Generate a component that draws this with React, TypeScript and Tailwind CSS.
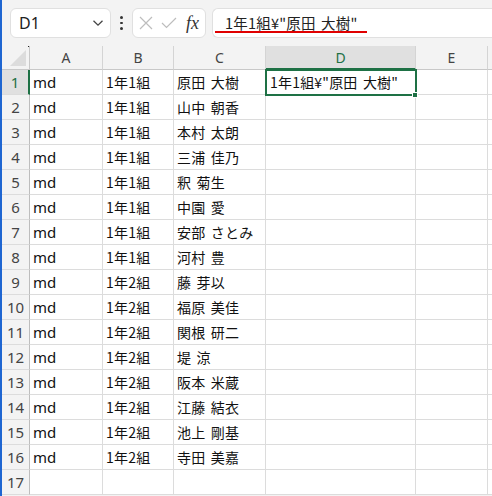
import React from "react";

const rows: [string, string, string][] = [
  ["md", "1年1組", "原田 大樹"],
  ["md", "1年1組", "山中 朝香"],
  ["md", "1年1組", "本村 太朗"],
  ["md", "1年1組", "三浦 佳乃"],
  ["md", "1年1組", "釈 菊生"],
  ["md", "1年1組", "中園 愛"],
  ["md", "1年1組", "安部 さとみ"],
  ["md", "1年1組", "河村 豊"],
  ["md", "1年2組", "藤 芽以"],
  ["md", "1年2組", "福原 美佳"],
  ["md", "1年2組", "関根 研二"],
  ["md", "1年2組", "堤 涼"],
  ["md", "1年2組", "阪本 米蔵"],
  ["md", "1年2組", "江藤 結衣"],
  ["md", "1年2組", "池上 剛基"],
  ["md", "1年2組", "寺田 美嘉"],
  ["", "", ""],
];

const cols = "grid-cols-[28px_73px_71px_92px_150px_72px_1fr]";
const jp = "font-['Noto_Sans_CJK_JP','Noto_Sans',sans-serif] text-[14.5px] tracking-[0.2px] [word-spacing:2px]";
const cell = "h-[25px] border-r border-b border-[#dcdcdc] bg-white px-[3px] flex items-center text-[14px] text-[#111] whitespace-nowrap overflow-hidden";

function Toolbar() {
  return (
    <div className="flex h-[46px] items-center bg-[#f3f3f3] pl-[8px]">
      <div className="flex h-[30px] w-[101px] items-center justify-between rounded-[6px] border border-[#e0e0e0] bg-white pl-[8px] pr-[6px]">
        <span className="font-['Noto_Sans',sans-serif] text-[16px] text-[#222]">D1</span>
        <svg width="12" height="8" viewBox="0 0 12 8" fill="none" stroke="#444" strokeWidth="1.3">
          <path d="M1.5 1.8 6 6.2 10.5 1.8" />
        </svg>
      </div>
      <div className="flex w-[21px] flex-col items-center gap-[3px]">
        <span className="h-[2.5px] w-[2.5px] rounded-full bg-[#333]" />
        <span className="h-[2.5px] w-[2.5px] rounded-full bg-[#333]" />
        <span className="h-[2.5px] w-[2.5px] rounded-full bg-[#333]" />
      </div>
      <div className="flex h-[30px] w-[74px] items-center rounded-[6px] border border-[#e0e0e0] bg-white pl-[6px]">
        <svg width="14" height="14" viewBox="0 0 14 14" fill="none" stroke="#bdbdbd" strokeWidth="1.2">
          <path d="M1 1 13 13M13 1 1 13" />
        </svg>
        <svg className="ml-[8px]" width="16" height="12" viewBox="0 0 16 12" fill="none" stroke="#bdbdbd" strokeWidth="1.2">
          <path d="M1 6 5.5 10.5 15 1" />
        </svg>
        <span className="ml-[9px] font-['Liberation_Serif',serif] text-[18px] italic leading-none text-[#333]">fx</span>
      </div>
      <div className="relative ml-[6px] flex h-[30px] flex-1 items-center rounded-l-[6px] border border-r-0 border-[#e0e0e0] bg-white pl-[12px]">
        <span className={`${jp} text-[#222]`}>1年1組¥"原田 大樹"</span>
        <div className="absolute left-[2px] top-[22px] h-[2px] w-[152px] bg-[#e00000]" />
      </div>
    </div>
  );
}

export default function App() {
  return (
    <div className="h-[496px] w-[492px] overflow-hidden border-l-2 border-[#1f66d1] bg-[#f3f3f3]">
      <Toolbar />
      <div className={`grid ${cols}`}>
        <div className="relative h-[24px] border-r border-b border-[#c8c8c8] bg-[#f3f3f3]">
          <span className="absolute right-[0px] top-0 h-[1px] w-[1px] bg-[#222]" />
          <svg className="absolute bottom-[3px] right-[3px]" width="16" height="16" viewBox="0 0 16 16">
            <path d="M16 0 16 16 0 16Z" fill="#dcdcdc" />
          </svg>
        </div>
        {["A", "B", "C", "D", "E", ""].map((c) => (
          <div
            key={c || "x"}
            className={`flex h-[24px] items-center justify-center border-r border-[#d4d4d4] font-['Noto_Sans',sans-serif] text-[14px] ${
              c === "D" ? "border-b-2 border-b-[#1e7145] bg-[#e0e0e0] text-[#1e7145]" : "border-b border-b-[#c8c8c8] bg-[#f3f3f3] text-[#444]"
            }`}
          >
            {c}
          </div>
        ))}
        {rows.map((r, i) => (
          <React.Fragment key={i}>
            <div
              className={`flex h-[25px] items-center justify-center border-b border-[#dcdcdc] font-['Noto_Sans',sans-serif] text-[15px] ${
                i === 0 ? "border-r-2 border-r-[#1e7145] bg-[#e0e0e0] text-[#1e7145]" : "border-r border-r-[#bdbdbd] bg-[#f3f3f3] text-[#444]"
              }`}
            >
              {i + 1}
            </div>
            <div className={`${cell} font-['Noto_Sans',sans-serif] text-[15px]`}>{r[0]}</div>
            <div className={`${cell} ${jp}`}>{r[1]}</div>
            <div className={`${cell} ${jp}`}>{r[2]}</div>
            <div className={`${cell} ${jp} relative overflow-visible`}>
              {i === 0 && (
                <>
                  <span className="pl-[1px]">1年1組¥"原田 大樹"</span>
                  <div className="absolute left-[-1px] top-[-1px] z-10 h-[27px] w-[152px] border-2 border-[#1e7145]" />
                  <div className="absolute bottom-[-4px] right-[-3px] z-20 h-[6px] w-[6px] border border-white bg-[#1e7145]" />
                </>
              )}
            </div>
            <div className={cell} />
            <div className={cell} />
          </React.Fragment>
        ))}
      </div>
    </div>
  );
}
